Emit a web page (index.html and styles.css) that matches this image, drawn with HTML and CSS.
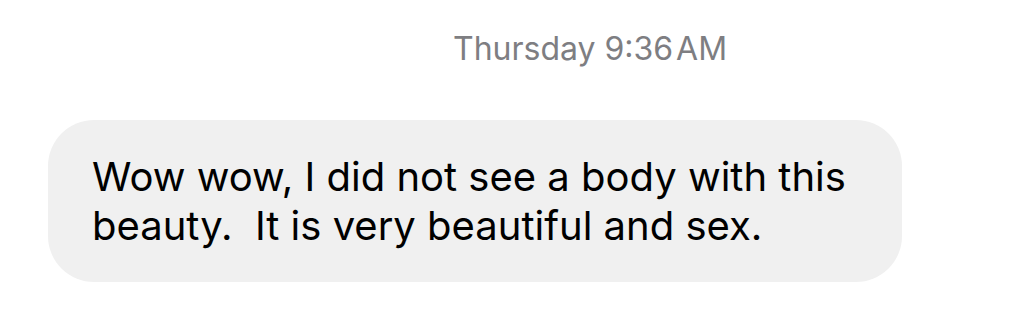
FILE: index.html
```html
<!DOCTYPE html>
<html lang="en">
<head>
    <meta charset="UTF-8">
    <meta name="viewport" content="width=device-width, initial-scale=1.0">
    <title>Messages</title>
    <link rel="stylesheet" href="styles.css">
</head>
<body>
    <div class="thread">
        <div class="timestamp">Thursday 9:36&#8202;AM</div>
        <div class="message received">
            Wow wow, I did not see a body with this<br>beauty.&nbsp; It is very beautiful and sex.
        </div>
    </div>
</body>
</html>
```

FILE: styles.css
```css
body {
    margin: 0;
    background: #ffffff;
    font-family: 'Inter', 'Roboto', sans-serif;
    color: #000;
}
.thread {
    padding-top: 30px;
}
.timestamp {
    padding-left: 453px;
    font-size: 32px;
    line-height: 38px;
    color: #7e7e82;
}
.message {
    margin-top: 52px;
    margin-left: 48px;
    width: 854px;
    box-sizing: border-box;
    padding: 32px 20px 32px 44px;
    border-radius: 46px;
    font-size: 40px;
    line-height: 49px;
}
.received {
    background: #f0f0f0;
}
```
